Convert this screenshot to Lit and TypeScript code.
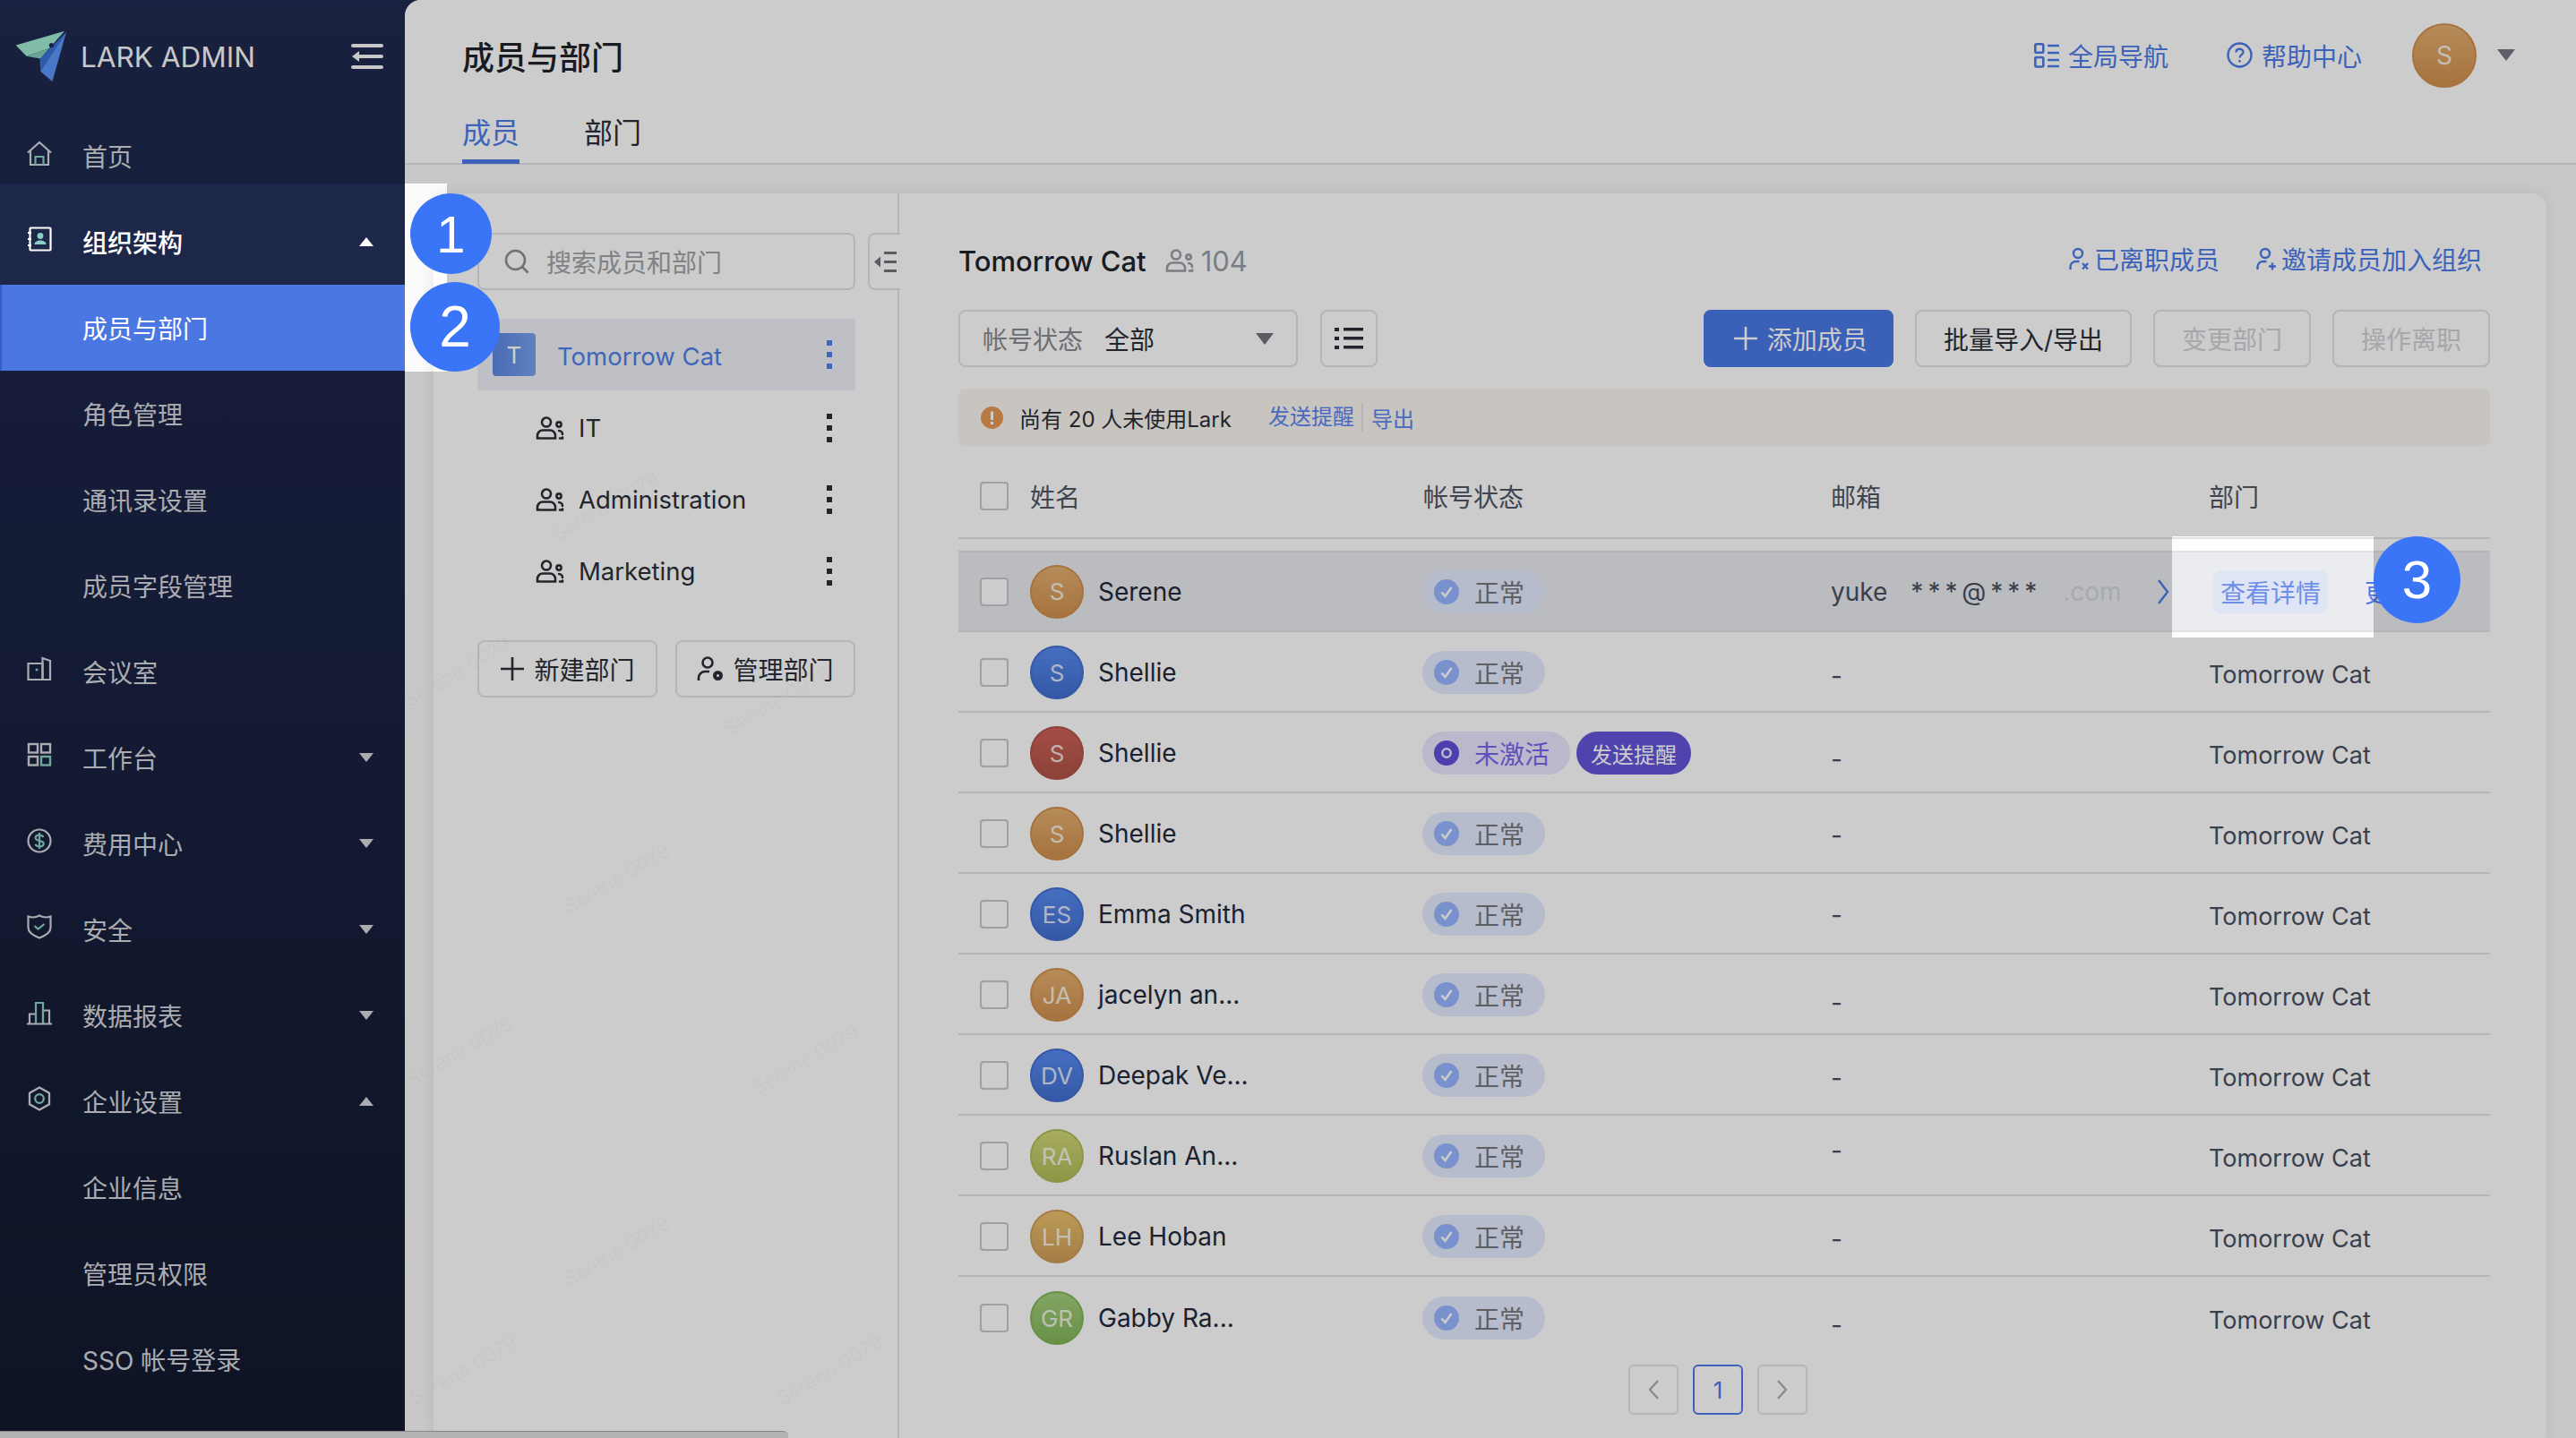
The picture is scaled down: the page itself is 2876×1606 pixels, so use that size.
import { LitElement, css, html } from "lit";
import { customElement } from "lit/decorators.js";

const peopleIcon = (w = 32, h = 26) => html`<svg class="ic" width=${w} height=${h} viewBox="0 0 32 26" fill="none" stroke="currentColor" stroke-width="2.6" stroke-linecap="round">
  <circle cx="12" cy="6.5" r="5" />
  <path d="M2 24.5v-3a6 6 0 0 1 6-6h8a6 6 0 0 1 6 6v3z" />
  <circle cx="26" cy="9" r="2.6" />
  <path d="M26 16a4 4 0 0 1 4 4M27 24.5h3v-1" />
</svg>`;

const dots = () => html`<svg class="dots" width="6" height="32" viewBox="0 0 6 32" fill="currentColor">
  <rect x="0" y="0" width="6" height="6" /><rect x="0" y="13" width="6" height="6" /><rect x="0" y="26" width="6" height="6" />
</svg>`;

const plus = (size = 28) => html`<svg width=${size} height=${size} viewBox="0 0 28 28" fill="none" stroke="currentColor" stroke-width="2.6"><path d="M14 1v26M1 14h26" /></svg>`;

const menuIcons: Record<string, unknown> = {
  home: html`<svg viewBox="0 0 28 28" fill="none" stroke="currentColor" stroke-width="2.2"><path d="M1 13.5 14 2l13 11.5" /><path d="M4 11v16h20V11" /><path class="ac" d="M9.5 27v-9h9v9" /></svg>`,
  org: html`<svg viewBox="0 0 28 28" fill="none" stroke="currentColor" stroke-width="2.2"><rect x="3.5" y="1.5" width="23" height="25" rx="1" /><path d="M1 7h4M1 14h4M1 21h4" /><circle class="acf" cx="15" cy="10.5" r="3.4" /><path class="acf" d="M8.5 20c0-3 3-4.5 6.5-4.5s6.5 1.5 6.5 4.5z" /></svg>`,
  room: html`<svg viewBox="0 0 28 28" fill="none" stroke="currentColor" stroke-width="2.2"><path d="M1.5 8H17.5V26H1.5z" /><path d="M17.5 26V2l8.5 3v21h-8.5" /><circle class="acf" cx="11" cy="15" r="1.5" /></svg>`,
  desk: html`<svg viewBox="0 0 28 28" fill="none" stroke="currentColor" stroke-width="2.4"><rect x="2" y="2" width="10" height="9.5" /><rect x="16" y="2" width="10" height="9.5" /><rect x="2" y="16" width="10" height="9.5" /><rect class="ac" x="16" y="16" width="10" height="9.5" /></svg>`,
  fee: html`<svg viewBox="0 0 28 28" fill="none" stroke="currentColor" stroke-width="2.2"><circle cx="14" cy="14" r="12.5" /><path class="ac" d="M18.5 10c-1-1.6-2.5-2.3-4.5-2.3-2.6 0-4.3 1.3-4.3 3.1 0 4.7 9 2 9 6.4 0 1.9-1.9 3.1-4.6 3.1-2.2 0-3.8-.8-4.8-2.4M14 5v18" /></svg>`,
  safe: html`<svg viewBox="0 0 28 28" fill="none" stroke="currentColor" stroke-width="2.2"><path d="M1.5 2.5c4 1.5 8 1.5 12.5-1 4.5 2.5 8.5 2.5 12.5 1V15c0 6-6 9-12.5 11.5C7.5 24 1.5 21 1.5 15z" /><path class="ac" d="m8.5 13 4 3.5 7-5.500" /></svg>`,
  chart: html`<svg viewBox="0 0 28 28" fill="none" stroke="currentColor" stroke-width="2.2"><path d="M0 26.5h28M3 26V15.5h7M18 26V11.5h7V26" /><path class="ac" d="M10 26V3h8v23" /></svg>`,
  cog: html`<svg viewBox="0 0 28 28" fill="none" stroke="currentColor" stroke-width="2.3"><path d="M14 1.5 25 7.7v12.6l-11 6.2-11-6.2V7.7z" /><circle class="ac" cx="14" cy="14" r="4.8" /></svg>`,
};

interface NavItem {
  label: string;
  icon?: string;
  caret?: "up" | "down";
  kind?: "group" | "active" | "first";
}

const nav: NavItem[] = [
  { label: "首页", icon: "home", kind: "first" },
  { label: "组织架构", icon: "org", caret: "up", kind: "group" },
  { label: "成员与部门", kind: "active" },
  { label: "角色管理" },
  { label: "通讯录设置" },
  { label: "成员字段管理" },
  { label: "会议室", icon: "room" },
  { label: "工作台", icon: "desk", caret: "down" },
  { label: "费用中心", icon: "fee", caret: "down" },
  { label: "安全", icon: "safe", caret: "down" },
  { label: "数据报表", icon: "chart", caret: "down" },
  { label: "企业设置", icon: "cog", caret: "up" },
  { label: "企业信息" },
  { label: "管理员权限" },
  { label: "SSO 帐号登录" },
];

interface Member {
  name: string;
  initials: string;
  tone: string;
  dash: number;
  inactive?: boolean;
}

const members: Member[] = [
  { name: "Serene", initials: "S", tone: "orange", dash: 0 },
  { name: "Shellie", initials: "S", tone: "blue", dash: 4 },
  { name: "Shellie", initials: "S", tone: "red", dash: 7, inactive: true },
  { name: "Shellie", initials: "S", tone: "orange", dash: 2 },
  { name: "Emma Smith", initials: "ES", tone: "blue", dash: 1 },
  { name: "jacelyn an...", initials: "JA", tone: "orange", dash: 9 },
  { name: "Deepak Ve...", initials: "DV", tone: "blue", dash: 3 },
  { name: "Ruslan An...", initials: "RA", tone: "olive", dash: -6 },
  { name: "Lee Hoban", initials: "LH", tone: "gold", dash: 3 },
  { name: "Gabby Ra...", initials: "GR", tone: "green", dash: 8 },
];

const marks = [
  [676, 565], [510, 750], [867, 782], [688, 981], [899, 1183],
  [513, 1174], [688, 1397], [517, 1530], [926, 1530],
];

@customElement("app-root")
export class AppRoot extends LitElement {
  static styles = css`
    :host {
      display: block;
      position: relative;
      width: 2876px;
      height: 1606px;
      overflow: hidden;
      font-family: Inter, "Noto Sans CJK SC", sans-serif;
      font-size: 28px;
      color: #2b2f36;
      background: #1e2a4f;
    }
    svg { display: block; flex: none; }
    .page { display: flex; height: 100%; }

    .side {
      width: 452px;
      flex: none;
      background: linear-gradient(180deg, #1e2a4f 0%, #1c2447 30%, #121a2e 100%);
      color: #d6d8de;
    }
    .brand {
      height: 126px;
      display: flex;
      align-items: center;
      padding-left: 17px;
      gap: 15px;
      color: #fafafa;
      font-size: 31.5px;
      box-sizing: border-box;
    }
    .brand .burger { margin-left: auto; margin-right: 24px; }
    .nav-item {
      height: 96px;
      display: flex;
      align-items: center;
      padding-left: 92px;
      padding-right: 35px;
      box-sizing: border-box;
    }
    .nav-item.has-icon { padding-left: 30px; gap: 34px; }
    .nav-icon { width: 28px; height: 28px; margin-bottom: 6px; }
    .nav-icon svg { width: 28px; height: 28px; }
    .ac { stroke: #8bd1c3; }
    .acf { fill: #8bd1c3; stroke: none; }
    .nav-item.first { height: 79px; padding-top: 17px; }
    .nav-item.group {
      height: 113px;
      padding-top: 17px;
      background: #1c2749;
      color: #fff;
      font-weight: 500;
    }
    .nav-item.active {
      background: #4b77e3;
      border-left: 2px solid #3b5cc0;
      padding-left: 90px;
      color: #fff;
    }
    .caret { margin-left: auto; width: 0; height: 0; border-left: 8.5px solid transparent; border-right: 8.5px solid transparent; }
    .caret.up { border-bottom: 10px solid currentColor; }
    .caret.down { border-top: 10px solid currentColor; }

    .main {
      flex: 1;
      min-width: 0;
      display: flex;
      flex-direction: column;
      background: #fbfbfc;
      border-top-left-radius: 18px;
      overflow: hidden;
    }
    .head {
      flex: none;
      height: 184px;
      box-sizing: border-box;
      background: #fff;
      border-bottom: 2px solid #e1e2e8;
      padding-left: 64px;
    }
    .head-top { height: 126px; box-sizing: border-box; display: flex; align-items: center; padding: 0 68px 3px 0; }
    .title { font-size: 36px; font-weight: 500; color: #1f2329; }
    .head-nav { margin-left: auto; display: flex; align-items: center; }
    .link { display: flex; align-items: center; gap: 10px; color: #4c7be8; }
    .head-nav .help { margin-left: 65px; }
    .avatar.me { margin: 0 23px 0 56px; width: 72px; height: 72px; font-size: 28px; }
    .me-caret { width: 0; height: 0; border-left: 10.5px solid transparent; border-right: 10.5px solid transparent; border-top: 13px solid #737880; }
    .tabs { display: flex; gap: 72px; }
    .tab { height: 57px; line-height: 46px; font-size: 32px; box-sizing: border-box; color: #2b2f36; }
    .tab.on { color: #4c7be8; border-bottom: 5px solid #4c7be8; }

    .body { flex: 1; min-height: 0; padding: 32px 33px 0 32px; display: flex; }
    .panel {
      flex: 1;
      display: flex;
      background: #fff;
      border-radius: 16px 16px 0 0;
      box-shadow: 0 0 18px rgba(31, 35, 41, 0.1);
      position: relative;
    }
    .tree-pane {
      width: 520px;
      flex: none;
      box-sizing: border-box;
      border-right: 2px solid #e1e2e8;
      padding: 44px 47px 0 49px;
    }
    .search {
      height: 64px;
      box-sizing: border-box;
      border: 2px solid #e1e2e8;
      border-radius: 8px;
      display: flex;
      align-items: center;
      padding-left: 28px;
      gap: 19px;
      color: #a0a3a8;
    }
    .collapse {
      position: absolute;
      left: 485px;
      top: 44px;
      width: 36px;
      height: 64px;
      box-sizing: border-box;
      background: #fff;
      border: 2px solid #e1e2e8;
      border-right: none;
      border-radius: 8px 0 0 8px;
      display: flex;
      align-items: center;
      padding-left: 5px;
      color: #707378;
    }
    .tree { margin-top: 32px; }
    .node {
      height: 80px;
      box-sizing: border-box;
      display: flex;
      align-items: center;
      padding: 4px 26px 0 65px;
      gap: 16px;
      font-size: 27.5px;
    }
    .node .dots { margin-left: auto; }
    .node.on { padding-left: 17px; padding-top: 0; gap: 24px; background: #eff0f8; color: #4f80e6; }
    .node.on .label { padding-top: 3px; }
    .node-badge {
      width: 48px;
      height: 48px;
      border-radius: 4px;
      background: linear-gradient(90deg, #5c88e2, #78a0f0);
      color: #fff;
      display: flex;
      align-items: center;
      justify-content: center;
      font-size: 26px;
    }
    .tree-actions { margin-top: 39px; display: flex; justify-content: space-between; }
    .btn {
      height: 64px;
      box-sizing: border-box;
      border: 2px solid #e1e2e8;
      border-radius: 8px;
      background: #fff;
      display: flex;
      align-items: center;
      justify-content: center;
      gap: 10px;
      padding: 0 30px;
      color: #2b2f36;
      white-space: nowrap;
    }
    .tree-actions .btn { width: 201px; padding: 0; }
    .btn.primary { background: #4a78e6; border-color: #4a78e6; color: #fff; padding: 0 27px 0 31px; }
    .btn.off { color: #cfd1d5; }

    .list-pane { flex: 1; min-width: 0; padding: 50px 63px 0 66px; }
    .list-top { height: 50px; display: flex; align-items: center; gap: 21px; }
    .org-name { font-size: 31px; font-weight: 500; color: #1f2329; }
    .count { display: flex; align-items: center; gap: 8px; font-size: 31px; color: #9a9ea5; }
    .list-links { margin: -5px 0 0 auto; padding-right: 9px; display: flex; gap: 41px; }
    .list-links .link { gap: 6px; }
    .tools { margin-top: 30px; display: flex; align-items: center; gap: 25px; }
    .select {
      width: 379px;
      height: 64px;
      box-sizing: border-box;
      border: 2px solid #e1e2e8;
      border-radius: 8px;
      display: flex;
      align-items: center;
      padding: 0 25px;
      gap: 24px;
      color: #888b90;
    }
    .select b { font-weight: 400; color: #2b2f36; }
    .select i { margin-left: auto; width: 0; height: 0; border-left: 10px solid transparent; border-right: 10px solid transparent; border-top: 13px solid #70737a; }
    .square { width: 64px; padding: 0; }
    .tools-right { margin-left: auto; display: flex; gap: 24px; }

    .notice {
      margin-top: 24px;
      height: 64px;
      border-radius: 8px;
      background: #fbf6f0;
      display: flex;
      align-items: center;
      padding-left: 25px;
      font-size: 24px;
      color: #2b2f36;
    }
    .notice .msg { margin-left: 18px; }
    .notice a { color: #5c85f0; }
    .notice .first { margin-left: 41px; padding-right: 8px; border-right: 2px solid #e1e2e8; line-height: 32px; }
    .notice .second { margin-left: 9px; }

    .row {
      display: grid;
      grid-template-columns: 495px 455px 422px 1fr;
      align-items: center;
      padding-left: 24px;
      box-sizing: border-box;
    }
    .row.th { height: 104px; padding-top: 10px; border-bottom: 2px solid #e1e2e8; color: #505664; margin-bottom: 14px; }
    .row.tr { height: 90px; padding-top: 2px; border-bottom: 2px solid #e1e2e8; }
    .row.tr.hover { background: #eaecf0; border-top: 2px solid #e1e2e8; margin-top: -1px; height: 91px; padding-top: 0; }
    .row.tr.last { border-bottom: none; }
    .name-cell { display: flex; align-items: center; }
    .th .name-cell { gap: 24px; }
    .check { width: 32px; height: 32px; box-sizing: border-box; border: 2px solid #c6c8cc; border-radius: 4px; background: #fff; flex: none; }
    .avatar {
      width: 60px;
      height: 60px;
      border-radius: 50%;
      box-sizing: border-box;
      display: flex;
      align-items: center;
      justify-content: center;
      color: #fff;
      font-size: 26px;
      flex: none;
    }
    .tr .avatar { margin: 0 16px 0 24px; }
    .avatar span { opacity: 0.8; }
    .orange { background: linear-gradient(180deg, #e4af70, #d0904e); border: 2px solid #d0904e; }
    .blue { background: linear-gradient(180deg, #588af1, #426fd0); border: 2px solid #426fd0; }
    .red { background: linear-gradient(180deg, #cc6256, #b05248); border: 2px solid #b05248; }
    .olive { background: linear-gradient(180deg, #d2d778, #afbc58); border: 2px solid #afbc58; }
    .gold { background: linear-gradient(180deg, #ebc36e, #ce9c58); border: 2px solid #ce9c58; }
    .green { background: linear-gradient(180deg, #a2ce7d, #83b558); border: 2px solid #83b558; }
    .person { color: #232a3c; white-space: nowrap; }
    .status { display: flex; align-items: center; gap: 7px; margin-left: -1px; }
    .pill {
      height: 48px;
      border-radius: 24px;
      background: #e5ebff;
      color: #737880;
      display: flex;
      align-items: center;
      padding: 0 23px 0 13px;
      gap: 17px;
    }
    .pill.pending { background: #ebe6ff; color: #7a63ee; }
    .nudge { height: 48px; border-radius: 24px; background: #6355da; color: #fff; font-size: 24px; padding: 0 16px; display: flex; align-items: center; }
    .mail { color: #494f5f; }
    .mail-full { display: flex; align-items: center; padding-right: 44px; }
    .stars { margin-left: 26px; letter-spacing: 5px; }
    .fade { margin-left: 24px; color: #d2d4d8; }
    .mail-full svg { margin-left: auto; }
    .dept { color: #494f5f; font-size: 27px; padding-top: 4px; white-space: nowrap; }
    .acts { display: flex; align-items: center; gap: 41px; margin-left: 5px; color: #4c7be8; white-space: nowrap; }
    .acts .view { width: 128px; height: 48px; background: #e0e5f5; border-radius: 8px; display: flex; align-items: center; justify-content: center; color: #6d8fe8; }
    .pager { margin-top: 8px; padding-right: 14px; display: flex; justify-content: center; gap: 16px; }
    .pg {
      width: 56px;
      height: 56px;
      box-sizing: border-box;
      border: 2px solid #e1e2e8;
      border-radius: 6px;
      display: flex;
      align-items: center;
      justify-content: center;
      color: #a8abb0;
      font-size: 26px;
    }
    .pg.on { border-color: #4c7be8; color: #4c7be8; }

    .mark {
      position: absolute;
      font-size: 22px;
      color: rgba(0, 0, 0, 0.03);
      transform: translate(-50%, -50%) rotate(-30deg);
      white-space: nowrap;
    }
    .scrollbar {
      position: absolute;
      left: 0;
      bottom: 0;
      width: 880px;
      height: 8px;
      background: #e0e0e4;
      border-top: 1px solid #a8a8ac;
      border-top-right-radius: 6px;
      box-sizing: border-box;
    }
    .dim {
      position: absolute;
      inset: 0;
      background: rgba(0, 0, 0, 0.2);
      clip-path: path(evenodd, "M0 0H2876V1606H0Z M0 205H499V415H0Z M2425 599H2650V712H2425Z");
    }
    .step {
      position: absolute;
      border-radius: 50%;
      background: #3a75f7;
      color: #fff;
      font-family: "Liberation Sans", Arial, sans-serif;
      display: flex;
      align-items: center;
      justify-content: center;
    }
    .s1 { left: 458px; top: 216px; width: 91px; height: 90px; font-size: 58px; }
    .s2 { left: 458px; top: 315px; width: 100px; height: 100px; font-size: 64px; }
    .s3 { left: 2650px; top: 599px; width: 97px; height: 97px; font-size: 60px; }
  `;

  renderNav(item: NavItem) {
    const cls = `nav-item ${item.icon ? "has-icon" : ""} ${item.kind ?? ""}`;
    return html`<div class=${cls}>
      ${item.icon ? html`<span class="nav-icon">${menuIcons[item.icon]}</span>` : ""}
      <span>${item.label}</span>
      ${item.caret ? html`<span class="caret ${item.caret}"></span>` : ""}
    </div>`;
  }

  renderStatus(m: Member) {
    if (m.inactive) {
      return html`<div class="status">
        <div class="pill pending">
          <svg width="28" height="28" viewBox="0 0 28 28"><circle cx="14" cy="14" r="10" fill="none" stroke="#624fdb" stroke-width="8" /><circle cx="14" cy="14" r="3.5" fill="#624fdb" /></svg>
          未激活
        </div>
        <div class="nudge">发送提醒</div>
      </div>`;
    }
    return html`<div class="status"><div class="pill">
      <svg width="28" height="28" viewBox="0 0 28 28"><circle cx="14" cy="14" r="14" fill="#98b6ff" /><path d="m8.5 14.5 4 4.5 7-10" fill="none" stroke="#fff" stroke-width="2.6" /></svg>
      正常
    </div></div>`;
  }

  renderRow(m: Member, i: number) {
    const hover = i === 0;
    const cls = `row tr ${hover ? "hover" : ""} ${i === members.length - 1 ? "last" : ""}`;
    return html`<div class=${cls}>
      <div class="name-cell">
        <span class="check"></span>
        <span class="avatar ${m.tone}"><span>${m.initials}</span></span>
        <span class="person">${m.name}</span>
      </div>
      ${this.renderStatus(m)}
      ${hover
        ? html`<div class="mail mail-full">
            <span>yuke</span><span class="stars">***@***</span><span class="fade">.com</span>
            <svg width="14" height="28" viewBox="0 0 14 28" fill="none" stroke="#4c7be8" stroke-width="2.4"><path d="m2 1 10 13L2 27" /></svg>
          </div>`
        : html`<div class="mail" style="transform: translateY(${m.dash}px)">-</div>`}
      ${hover
        ? html`<div class="acts"><span class="view">查看详情</span><span>更多</span></div>`
        : html`<div class="dept">Tomorrow Cat</div>`}
    </div>`;
  }

  render() {
    return html`
      <div class="page">
        <aside class="side">
          <div class="brand">
            <svg width="58" height="58" viewBox="50 40 175 175">
              <path d="M216 42 52 90l36 37 77-27z" fill="#a0ebd2" />
              <path d="m88 127 47 8 30-35z" fill="#85cebb" />
              <path d="M222 45 133 135l2 43z" fill="#3872dc" />
              <path d="m222 45-87 133 40 34z" fill="#5d96fa" />
              <circle cx="172" cy="90" r="8" fill="#1e2a4f" />
            </svg>
            <span>LARK ADMIN</span>
            <svg class="burger" width="36" height="28" viewBox="0 0 36 28" fill="none" stroke="#fafafa" stroke-width="4" stroke-linecap="round">
              <path d="M2 2h32M8 14h26M2 26h32" />
              <path d="M9 8 1 14l8 6z" fill="#fafafa" stroke="none" />
            </svg>
          </div>
          ${nav.map((n) => this.renderNav(n))}
        </aside>
        <section class="main">
          <header class="head">
            <div class="head-top">
              <span class="title">成员与部门</span>
              <div class="head-nav">
                <span class="link">
                  <svg width="28" height="28" viewBox="0 0 28 28" fill="none" stroke="currentColor" stroke-width="2.6"><rect x="1.3" y="1.3" width="9" height="9.5" rx="1.5" /><rect x="1.3" y="16" width="9" height="10.5" rx="1.5" /><path d="M15 3h13M15 11h13M15 19h13M15 26h13" /></svg>
                  全局导航
                </span>
                <span class="link help">
                  <svg width="29" height="29" viewBox="0 0 29 29" fill="none" stroke="currentColor" stroke-width="2.4"><circle cx="14.5" cy="14.5" r="13" /><path d="M10.5 11.5c0-2.4 1.8-3.8 4-3.800s4 1.400 4 3.500c0 3-4 3-4 6.300" /><path d="M14.5 20v2.500" /></svg>
                  帮助中心
                </span>
                <span class="avatar orange me"><span>S</span></span>
                <span class="me-caret"></span>
              </div>
            </div>
            <div class="tabs">
              <span class="tab on">成员</span>
              <span class="tab">部门</span>
            </div>
          </header>
          <div class="body">
            <div class="panel">
              <div class="tree-pane">
                <div class="search">
                  <svg width="28" height="28" viewBox="0 0 28 28" fill="none" stroke="#8f8f8f" stroke-width="2.6"><circle cx="12.5" cy="12.5" r="10.5" /><path d="m20 20 6.5 6.5" /></svg>
                  搜索成员和部门
                </div>
                <div class="tree">
                  <div class="node on"><span class="node-badge">T</span><span class="label">Tomorrow Cat</span>${dots()}</div>
                  ${["IT", "Administration", "Marketing"].map(
                    (d) => html`<div class="node">${peopleIcon()}${d}${dots()}</div>`
                  )}
                </div>
                <div class="tree-actions">
                  <div class="btn">${plus()}新建部门</div>
                  <div class="btn">
                    <svg width="30" height="28" viewBox="0 0 30 28" fill="none" stroke="currentColor" stroke-width="2.6"><circle cx="12" cy="7" r="5.5" /><path d="M2 27v-3a7 7 0 0 1 7-7h5" /><circle cx="23.5" cy="21.5" r="3.5" stroke-width="4" /></svg>
                    管理部门
                  </div>
                </div>
              </div>
              <div class="collapse">
                <svg width="25" height="23" viewBox="0 0 25 23" fill="currentColor"><path d="M7 5.5v12L0 11.5z" /><rect x="11" y="0" width="14" height="3" /><rect x="11" y="10" width="14" height="3" /><rect x="11" y="20" width="14" height="3" /></svg>
              </div>
              <div class="list-pane">
                <div class="list-top">
                  <span class="org-name">Tomorrow Cat</span>
                  <span class="count">${peopleIcon()}104</span>
                  <div class="list-links">
                    <span class="link">
                      <svg width="22" height="26" viewBox="0 0 22 26" fill="none" stroke="currentColor" stroke-width="2.4"><circle cx="10" cy="7" r="5" /><path d="M1.5 25v-3a6 6 0 0 1 6-6h4" /><path d="m15 18 6 6.5M21 18l-6 6.5" /></svg>
                      已离职成员
                    </span>
                    <span class="link">
                      <svg width="22" height="26" viewBox="0 0 22 26" fill="none" stroke="currentColor" stroke-width="2.4"><circle cx="10" cy="7" r="5" /><path d="M1.5 25v-3a6 6 0 0 1 6-6h4" /><path d="M14 21.5h8M18 17.5v8" /></svg>
                      邀请成员加入组织
                    </span>
                  </div>
                </div>
                <div class="tools">
                  <div class="select">帐号状态<b>全部</b><i></i></div>
                  <div class="btn square">
                    <svg width="32" height="24" viewBox="0 0 32 24" fill="#2b2f36"><rect x="0" y="0" width="5" height="4" /><rect x="0" y="10" width="5" height="4" /><rect x="0" y="20" width="5" height="4" /><rect x="10" y="0" width="22" height="3.5" /><rect x="10" y="10" width="22" height="3.5" /><rect x="10" y="20" width="22" height="3.5" /></svg>
                  </div>
                  <div class="tools-right">
                    <div class="btn primary">${plus()}添加成员</div>
                    <div class="btn">批量导入/导出</div>
                    <div class="btn off">变更部门</div>
                    <div class="btn off">操作离职</div>
                  </div>
                </div>
                <div class="notice">
                  <svg width="25" height="25" viewBox="0 0 25 25"><circle cx="12.5" cy="12.5" r="12.5" fill="#e69953" /><rect x="11" y="5.5" width="3" height="9.5" fill="#fff" /><rect x="11" y="17" width="3" height="3" fill="#fff" /></svg>
                  <span class="msg">尚有 20 人未使用Lark</span>
                  <a class="first">发送提醒</a><a class="second">导出</a>
                </div>
                <div class="row th">
                  <div class="name-cell"><span class="check"></span><span>姓名</span></div>
                  <div>帐号状态</div>
                  <div>邮箱</div>
                  <div>部门</div>
                </div>
                ${members.map((m, i) => this.renderRow(m, i))}
                <div class="pager">
                  <span class="pg"><svg width="14" height="22" viewBox="0 0 14 22" fill="none" stroke="currentColor" stroke-width="2.2"><path d="M12 1 3 11l9 10" /></svg></span>
                  <span class="pg on">1</span>
                  <span class="pg"><svg width="14" height="22" viewBox="0 0 14 22" fill="none" stroke="currentColor" stroke-width="2.2"><path d="m2 1 9 10-9 10" /></svg></span>
                </div>
              </div>
            </div>
          </div>
        </section>
      </div>
      ${marks.map(
        ([x, y]) => html`<span class="mark" style="left:${x}px;top:${y}px">Serene 0079</span>`
      )}
      <div class="scrollbar"></div>
      <div class="dim"></div>
      <div class="step s1">1</div>
      <div class="step s2">2</div>
      <div class="step s3">3</div>
    `;
  }
}
